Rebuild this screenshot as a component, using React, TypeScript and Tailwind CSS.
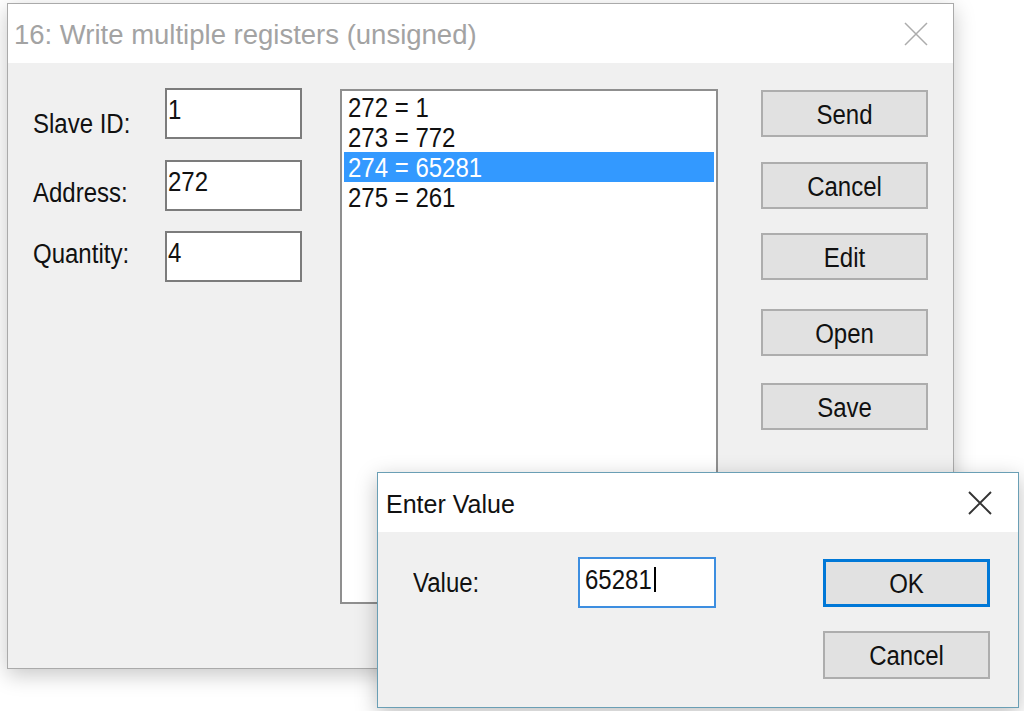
import React from "react";

// dialog body text (MS Sans Serif look, stretched a bit vertically)
function Txt({ children, className = "" }: { children: React.ReactNode; className?: string }) {
  return (
    <span className={`inline-block origin-center scale-y-[1.15] text-[24px] leading-[24px] whitespace-pre ${className}`}>
      {children}
    </span>
  );
}

function CloseX({ className = "", width = 1.6 }: { className?: string; width?: number }) {
  return (
    <svg viewBox="0 0 24 24" className={className} fill="none">
      <path d="M1 1 L23 23 M23 1 L1 23" stroke="currentColor" strokeWidth={width} />
    </svg>
  );
}

function Button({ label, className = "" }: { label: string; className?: string }) {
  return (
    <div className={`w-[167px] flex items-center justify-center bg-[#e1e1e1] pt-[2px] text-[#111] ${className}`}>
      <Txt>{label}</Txt>
    </div>
  );
}

const fields = [
  { label: "Slave ID:", value: "1", mt: "mt-[24px]", gap: "" },
  { label: "Address:", value: "272", mt: "mt-[21px]", gap: "mt-[21px]" },
  { label: "Quantity:", value: "4", mt: "mt-[11px]", gap: "mt-[20px]" },
];

const registers = ["272 = 1", "273 = 772", "274 = 65281", "275 = 261"];

export default function App() {
  return (
    <div className="relative w-[1024px] h-[711px] overflow-hidden bg-white font-['Liberation_Sans',Arial,sans-serif]">
      {/* main dialog (inactive) */}
      <div className="absolute left-[7px] top-[3px] w-[947px] h-[666px] flex flex-col border border-[#aaaaaa] bg-[#f0f0f0] shadow-[0_6px_20px_rgba(0,0,0,0.22)]">
        <div className="h-[59px] shrink-0 bg-white flex items-center justify-between pl-[6px] pr-[25px]">
          <span className="pt-[2px] text-[27.5px] leading-[27px] text-[#a3a3a3]">16: Write multiple registers (unsigned)</span>
          <CloseX className="w-[24px] h-[24px] text-[#acacac]" width={1.5} />
        </div>

        <div className="flex items-start pt-[25px]">
          <div className="pl-[25px] flex flex-col">
            {fields.map((f) => (
              <div key={f.label} className={`flex items-start ${f.gap}`}>
                <div className={`w-[132px] text-[#111] ${f.mt}`}>
                  <Txt>{f.label}</Txt>
                </div>
                <div className="w-[137px] h-[51px] border-2 border-[#7c7c7c] bg-white pl-[1px] pt-[8px] text-[#111]">
                  <Txt>{f.value}</Txt>
                </div>
              </div>
            ))}
          </div>

          <div className="ml-[38px] mt-[1px] w-[378px] h-[515px] border-2 border-[#8f8f8f] bg-white px-[2px] pt-[1px]">
            {registers.map((r, i) => (
              <div
                key={r}
                className={`h-[30px] pl-[4px] pt-[4px] ${i === 2 ? "bg-[#3399ff] text-white" : "text-[#111]"}`}
              >
                <Txt>{r}</Txt>
              </div>
            ))}
          </div>

          <div className="ml-[43px] flex flex-col">
            <Button label="Send" className="mt-[2px] h-[47px] border-2 border-[#adadad]" />
            <Button label="Cancel" className="mt-[25px] h-[47px] border-2 border-[#adadad]" />
            <Button label="Edit" className="mt-[24px] h-[47px] border-2 border-[#adadad]" />
            <Button label="Open" className="mt-[29px] h-[47px] border-2 border-[#adadad]" />
            <Button label="Save" className="mt-[27px] h-[47px] border-2 border-[#adadad]" />
          </div>
        </div>
      </div>

      {/* Enter Value dialog (active) */}
      <div className="absolute left-[377px] top-[472px] w-[642px] h-[236px] flex flex-col border border-[#6a9fb5] bg-[#f0f0f0] shadow-[0_6px_20px_rgba(0,0,0,0.25)]">
        <div className="h-[59px] shrink-0 bg-white flex items-center justify-between pl-[8px] pr-[26px]">
          <span className="pt-[3px] text-[25px] leading-[25px] text-[#111]">Enter Value</span>
          <CloseX className="w-[24px] h-[24px] text-[#333]" width={1.9} />
        </div>

        <div className="flex items-start pt-[25px]">
          <div className="w-[200px] pl-[35px] mt-[14px] text-[#111]">
            <Txt>Value:</Txt>
          </div>
          <div className="w-[138px] h-[51px] flex items-start border-2 border-[#3d8ee0] bg-white pl-[5px] pt-[9px] text-[#111]">
            <Txt>65281</Txt>
            <span className="ml-[2px] w-[2px] h-[25px] -mt-[1px] bg-black" />
          </div>
          <div className="ml-[107px] flex flex-col">
            <Button label="OK" className="mt-[2px] h-[48px] border-[3px] border-[#0078d7]" />
            <Button label="Cancel" className="mt-[24px] h-[48px] border-2 border-[#adadad]" />
          </div>
        </div>
      </div>
    </div>
  );
}
